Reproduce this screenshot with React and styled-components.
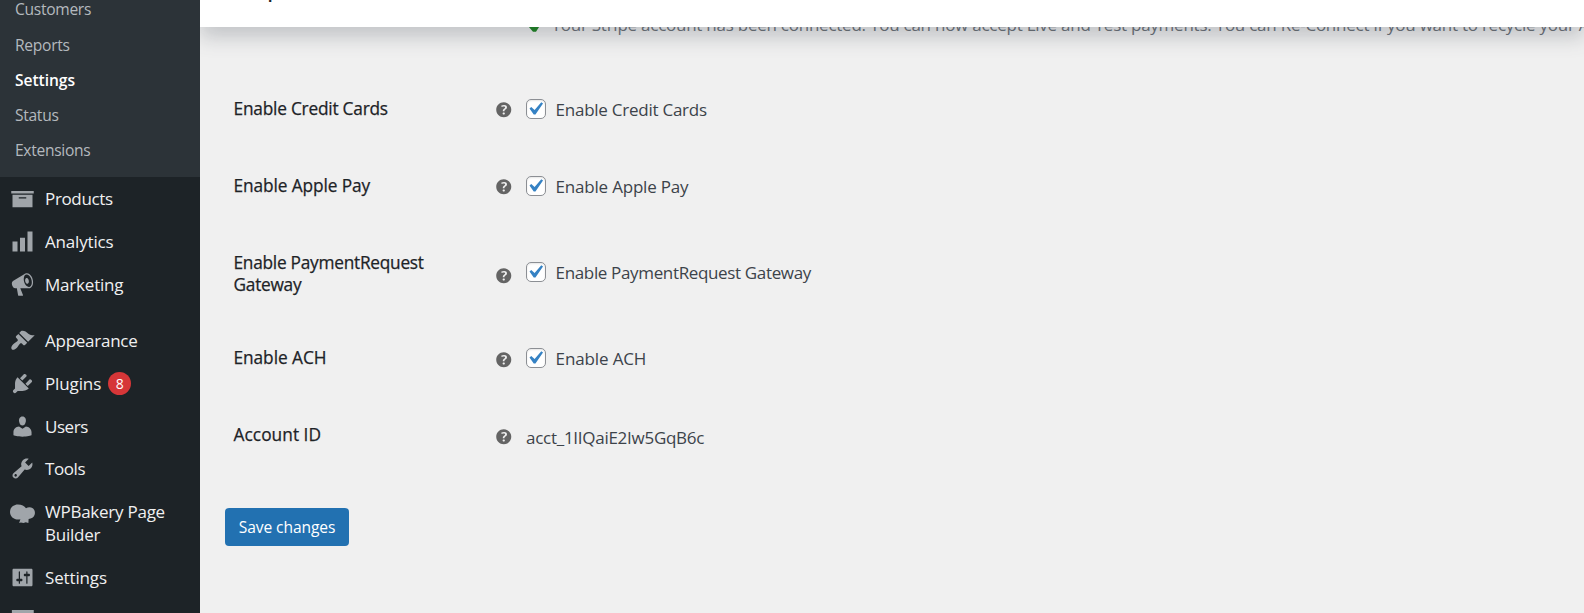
import React from "react";
import styled, { createGlobalStyle } from "styled-components";

const GlobalStyle = createGlobalStyle`
  *, *::before, *::after { box-sizing: border-box; }
  body {
    margin: 0;
    background: #f0f0f0;
    font-family: "Open Sans", "Noto Sans", sans-serif;
    font-size: 17px;
    overflow: hidden;
  }
`;

const Page = styled.div`
  display: flex;
  width: 1584px;
  height: 613px;
  overflow: hidden;
`;

const Sidebar = styled.nav`
  position: relative;
  z-index: 2;
  flex: none;
  width: 200px;
  height: 613px;
  overflow: hidden;
  background: #1d2327;
`;

const Submenu = styled.div`
  height: 177px;
  padding-left: 15px;
  overflow: hidden;
  background: #2c3338;
  display: flex;
  flex-direction: column;
  justify-content: flex-end;
  padding-bottom: 9px;
`;

const SubItem = styled.a`
  flex: none;
  height: 35.1px;
  line-height: 35px;
  font-size: 15.6px;
  white-space: nowrap;
  letter-spacing: ${(p) => p.$track || 0}px;
  color: ${(p) => (p.$current ? "#fff" : "#b4b9be")};
  font-weight: ${(p) => (p.$current ? 600 : 400)};

  &:first-child { height: 36px; }
`;

const MenuItem = styled.a`
  display: flex;
  align-items: flex-start;
  min-height: 42.65px;
  padding: 8.75px 0 11.25px;
  margin-top: ${(p) => (p.$group ? 13.2 : 0)}px;
  color: #f0f0f1;
`;

const MenuIcon = styled.svg`
  flex: none;
  width: 25px;
  height: 25px;
  margin: 0.4px 10px -5px;
  fill: #a0a5aa;
`;

const MenuLabel = styled.span`
  line-height: 22.75px;
  padding-top: 2.3px;
  margin-bottom: -2.2px;
  white-space: pre-line;
  letter-spacing: ${(p) => p.$track || 0}px;
`;

const Badge = styled.span`
  width: 23px;
  height: 23px;
  margin: 1.8px 0 -4px 7px;
  border-radius: 50%;
  background: #d63638;
  color: #fff;
  font-size: 14px;
  line-height: 23px;
  text-align: center;
`;

const Main = styled.main`
  flex: 1;
  min-width: 0;
  height: 613px;
  overflow: hidden;
`;

const TopBar = styled.header`
  position: relative;
  z-index: 1;
  height: 27px;
  background: #fff;
  box-shadow: 0 10px 20px rgba(85, 93, 102, 0.3);
`;

const TopTitle = styled.div`
  height: 27px;
  overflow: hidden;
  padding-left: 36px;
  font-size: 19px;
  font-weight: 600;
  line-height: 20px;
  color: #1d2327;

  span { display: block; margin-top: -20px; }
`;

const Notice = styled.p`
  display: flex;
  height: 46px;
  margin: 0;
  padding-left: 326px;
  color: #646970;
  white-space: nowrap;
  line-height: 24px;

  span { margin: -14px 0 0 9.5px; letter-spacing: ${(p) => p.$track}px; }
`;

const NoticeMark = styled.svg`
  flex: none;
  width: 16px;
  height: 18px;
  margin-top: -13px;
  fill: #0f7f14;
`;

const Row = styled.div`
  display: grid;
  grid-template-columns: 262.5px 29.5px 1fr;
  height: ${(p) => (p.$tall ? 95 : 77)}px;
  padding-left: 33.5px;
`;

const RowLabel = styled.div`
  padding-top: 25.2px;
  line-height: 22.1px;
  font-size: 17.3px;
  font-weight: 500;
  color: #1d2327;
  -webkit-text-stroke: 0.25px #1d2327;
  white-space: pre-line;
  letter-spacing: ${(p) => p.$track || 0}px;
`;

const HelpIcon = styled.svg`
  width: 21.5px;
  height: 21.5px;
  margin-left: -3px;
  margin-top: ${(p) => p.$top}px;
  fill: #646464;
`;

const Field = styled.label`
  display: flex;
  align-items: center;
  align-self: center;
  height: 24px;
  margin-top: ${(p) => (p.$plain ? "0" : "-5px")};
  padding-left: 0.5px;
  color: #3c434a;
`;

const FieldText = styled.span`
  letter-spacing: ${(p) => p.$track || 0}px;
`;

const CheckBox = styled.span`
  display: block;
  width: 20px;
  height: 20px;
  margin-right: 9.6px;
  border: 1px solid #8c8f94;
  border-radius: 5px;
  background: #fff;
  box-shadow: inset 0 1px 2px rgba(0, 0, 0, 0.1);

  svg { display: block; width: 26px; height: 26px; margin: -4px 0 0 -5px; fill: #3582c4; }
`;

const SaveButton = styled.button`
  display: block;
  width: 124px;
  height: 38px;
  margin: 32px 0 0 25px;
  padding: 0;
  border: 0;
  border-radius: 4px;
  background: #2271b1;
  color: #fff;
  font-family: inherit;
  font-size: 15.6px;
  letter-spacing: ${(p) => p.$track || 0}px;
`;

const icons = {
  archive: "M19 4v2H1V4h18zM2 7h16v10H2V7zm11 3V9H7v1h6z",
  chart: "M18 18V2h-4v16h4zm-6 0V7H8v11h4zm-6 0v-8H2v8h4z",
  megaphone:
    "M18.15 5.94c.46 1.62.38 3.22-.02 4.48-.42 1.28-1.26 2.18-2.3 2.48-.16.06-.26.06-.4.06-.06.02-.12.02-.18.02-.06.02-.14.02-.22.02h-6.8l2.22 5.5c.02.14-.06.26-.14.34-.08.1-.24.16-.34.16H6.95c-.1 0-.26-.06-.34-.16-.08-.08-.16-.2-.14-.34l-1-5.5H4.25l-.02-.02c-.5.06-1.08-.18-1.54-.62s-.88-1.08-1.06-1.88c-.24-.8-.2-1.56-.02-2.2.18-.62.58-1.08 1.06-1.3l.02-.02 9-5.4c.1-.06.18-.1.24-.16.06-.04.14-.08.24-.12.16-.08.28-.12.5-.18 1.04-.3 2.24.1 3.22.98s1.84 2.24 2.26 3.86zm-2.58 5.98h-.02c.4-.1.74-.34 1.04-.7.58-.7.86-1.76.86-3.04 0-.64-.1-1.3-.28-1.98-.34-1.36-1.02-2.5-1.78-3.24s-1.68-1.1-2.46-.88c-.82.22-1.4.96-1.7 2-.32 1.04-.28 2.36.06 3.72.38 1.36 1 2.5 1.8 3.24.78.74 1.62 1.1 2.48.88zm-2.54-7.08c.22-.04.42-.02.62.04.38.16.76.48 1.02 1s.42 1.2.42 1.78c0 .3-.04.56-.12.8-.18.48-.44.84-.86.94-.34.1-.8-.06-1.14-.4s-.64-.86-.78-1.5c-.18-.62-.12-1.24.02-1.72s.48-.84.82-.94z",
  brush:
    "M14.48 11.06L7.41 3.99l1.5-1.5c.5-.56 2.3-.47 3.51.32 1.21.8 1.43 1.28 2.91 2.1 1.18.64 2.45 1.26 4.45.85zm-.71.71L6.7 4.7 4.93 6.47c-.39.39-.39 1.02 0 1.41l1.06 1.06c.39.39.39 1.03 0 1.42-.6.6-1.43 1.11-2.21 1.69-.35.26-.7.53-1.01.84C1.43 14.23.4 16.08 1.4 17.07c.99 1 2.84-.03 4.18-1.36.31-.31.58-.66.85-1.02.57-.78 1.08-1.61 1.69-2.21.39-.39 1.02-.39 1.41 0l1.06 1.06c.39.39 1.02.39 1.41 0z",
  plug:
    "M13.11 4.36L9.87 7.6 8 5.73l3.24-3.24c.35-.34 1.05-.2 1.56.32.52.51.66 1.21.31 1.55zm-8 1.77l.91-1.12 9.01 9.01-1.19.84c-.71.71-2.63 1.16-3.82 1.16H6.14L4.9 17.26c-.59.59-1.54.59-2.12 0-.59-.58-.59-1.53 0-2.12l1.24-1.24v-3.88c0-1.13.4-3.19 1.09-3.89zm7.26 3.97l3.24-3.24c.34-.35 1.04-.21 1.55.31.52.51.66 1.21.31 1.55l-3.24 3.25z",
  user:
    "M10 9.25c-2.27 0-2.73-3.44-2.73-3.44C7 4.02 7.82 2 9.97 2c2.16 0 2.98 2.02 2.71 3.81 0 0-.41 3.44-2.68 3.44zm0 2.57L12.72 10c2.39 0 4.52 2.33 4.52 4.53v2.49s-3.65 1.13-7.24 1.13c-3.65 0-7.24-1.13-7.24-1.13v-2.49c0-2.25 1.94-4.48 4.47-4.48z",
  wrench:
    "M16.68 9.77c-1.34 1.34-3.3 1.67-4.95.99l-5.41 6.52c-.99.99-2.59.99-3.58 0s-.99-2.59 0-3.57l6.52-5.42c-.68-1.65-.35-3.61.99-4.95 1.28-1.28 3.12-1.62 4.72-1.06l-2.89 2.89 2.82 2.82 2.86-2.87c.53 1.58.18 3.39-1.08 4.65zM3.81 16.21c.4.39 1.04.39 1.43 0 .4-.4.4-1.04 0-1.43-.39-.4-1.03-.4-1.43 0-.39.39-.39 1.03 0 1.43z",
  cloud:
    "M6.3 4.4C9.3 4.4 11.6 5.7 12.8 7.4C14.3 6.4 16.6 6.3 18.2 7.4C19.8 8.5 20.3 10.7 19.7 12.6C19.1 14.7 17.2 15.9 14.9 15.9L14.7 19.2L12.6 18.6L10.8 19.2L8.7 18.7L7.3 19.2L8.3 16.2C3.6 17 0 14.3 0 10.3C0 6.9 2.8 4.4 6.3 4.4z",
  sliders:
    "M18 16V4c0-.55-.45-1-1-1H3c-.55 0-1 .45-1 1v12c0 .55.45 1 1 1h14c.55 0 1-.45 1-1zM8 11h1c.55 0 1 .45 1 1s-.45 1-1 1H8v1.5c0 .28-.22.5-.5.5s-.5-.22-.5-.5V13H6c-.55 0-1-.45-1-1s.45-1 1-1h1V5.5c0-.28.22-.5.5-.5s.5.22.5.5V11zm5-2h-1c-.55 0-1-.45-1-1s.45-1 1-1h1V5.5c0-.28.22-.5.5-.5s.5.22.5.5V7h1c.55 0 1 .45 1 1s-.45 1-1 1h-1v5.5c0 .28-.22.5-.5.5s-.5-.22-.5-.5V9z",
  frame: "M1.5 1.6h17.5v16H1.5zM4 4v11h12.5V4z",
  help:
    "M17 10c0-3.87-3.14-7-7-7-3.87 0-7 3.13-7 7s3.13 7 7 7c3.86 0 7-3.13 7-7zm-6.3 1.48H9.14v-.43c0-.38.08-.7.24-.98s.46-.57.88-.89c.41-.29.68-.53.81-.71.14-.18.2-.39.2-.62 0-.25-.09-.44-.28-.58-.19-.13-.45-.19-.79-.19-.58 0-1.25.15-2 .46l-.64-1.28c.87-.49 1.8-.74 2.77-.74.81 0 1.45.2 1.92.58.48.39.71.91.71 1.55 0 .43-.09.8-.29 1.11-.19.32-.57.67-1.11 1.06-.38.28-.61.49-.71.63-.1.15-.15.34-.15.57zm-1.47 2.74c-.18-.17-.27-.42-.27-.73 0-.33.08-.58.26-.75s.43-.25.77-.25c.32 0 .57.09.75.26s.27.42.27.74c0 .3-.09.55-.27.72-.18.18-.43.27-.75.27-.33 0-.58-.09-.76-.26z",
  check: "M14.83 4.89l1.34.94-5.81 8.38H9.02L5.78 9.67l1.34-1.25 2.57 2.4z",
};

const subItems = [
  { text: "Customers", track: -0.3 },
  { text: "Reports", track: -0.27 },
  { text: "Settings", track: -0.05, current: true },
  { text: "Status", track: -0.3 },
  { text: "Extensions", track: -0.3 },
];

const menuItems = [
  { icon: "archive", text: "Products", track: -0.35 },
  { icon: "chart", text: "Analytics", track: -0.18 },
  { icon: "megaphone", text: "Marketing", track: -0.2 },
  { icon: "brush", text: "Appearance", track: -0.25, group: true },
  { icon: "plug", text: "Plugins", track: -0.12, count: 8 },
  { icon: "user", text: "Users", track: -0.45 },
  { icon: "wrench", text: "Tools", track: -0.4 },
  { icon: "cloud", text: "WPBakery Page\nBuilder", track: -0.25 },
  { icon: "sliders", text: "Settings", track: -0.15 },
  { icon: "frame", text: "" },
];

const rows = [
  { label: "Enable Credit Cards", lt: -0.22, text: "Enable Credit Cards", track: -0.25, help: 26 },
  { label: "Enable Apple Pay", lt: -0.1, text: "Enable Apple Pay", track: -0.2, help: 26 },
  { label: "Enable PaymentRequest\nGateway", lt: -0.26, text: "Enable PaymentRequest Gateway", track: -0.35, help: 37.5, tall: true },
  { label: "Enable ACH", lt: -0.06, text: "Enable ACH", track: -0.13, help: 26.8 },
  { label: "Account ID", lt: 0.05, text: "acct_1IIQaiE2Iw5GqB6c", track: -0.27, help: 27, plain: true },
];

export default function App() {
  return (
    <Page>
      <GlobalStyle />
      <Sidebar>
        <Submenu>
          {subItems.map((s) => (
            <SubItem key={s.text} $track={s.track} $current={s.current}>{s.text}</SubItem>
          ))}
        </Submenu>
        {menuItems.map((m) => (
          <MenuItem key={m.icon} $group={m.group}>
            <MenuIcon viewBox="0 0 20 20"><path fillRule="evenodd" d={icons[m.icon]} /></MenuIcon>
            <MenuLabel $track={m.track}>{m.text}</MenuLabel>
            {m.count && <Badge>{m.count}</Badge>}
          </MenuItem>
        ))}
      </Sidebar>
      <Main>
        <TopBar>
          <TopTitle><span>Stripe</span></TopTitle>
        </TopBar>
        <Notice $track={-0.247}>
          <NoticeMark viewBox="0 0 16 18"><path d="M0 10L4 7L7.5 11L13 0L16 2L14 11.5L10 17.8H7L2.5 12.5z" /></NoticeMark>
          <span>
            Your Stripe account has been connected. You can now accept Live and Test payments. You can Re-Connect if you want to recycle your API keys
          </span>
        </Notice>
        {rows.map((r) => (
          <Row key={r.label} $tall={r.tall}>
            <RowLabel $track={r.lt}>{r.label}</RowLabel>
            <HelpIcon viewBox="0 0 20 20" $top={r.help}><path d={icons.help} /></HelpIcon>
            <Field $plain={r.plain}>
              {!r.plain && (
                <CheckBox><svg viewBox="0 0 20 20"><path d={icons.check} /></svg></CheckBox>
              )}
              <FieldText $track={r.track}>{r.text}</FieldText>
            </Field>
          </Row>
        ))}
        <SaveButton $track={-0.1}>Save changes</SaveButton>
      </Main>
    </Page>
  );
}
